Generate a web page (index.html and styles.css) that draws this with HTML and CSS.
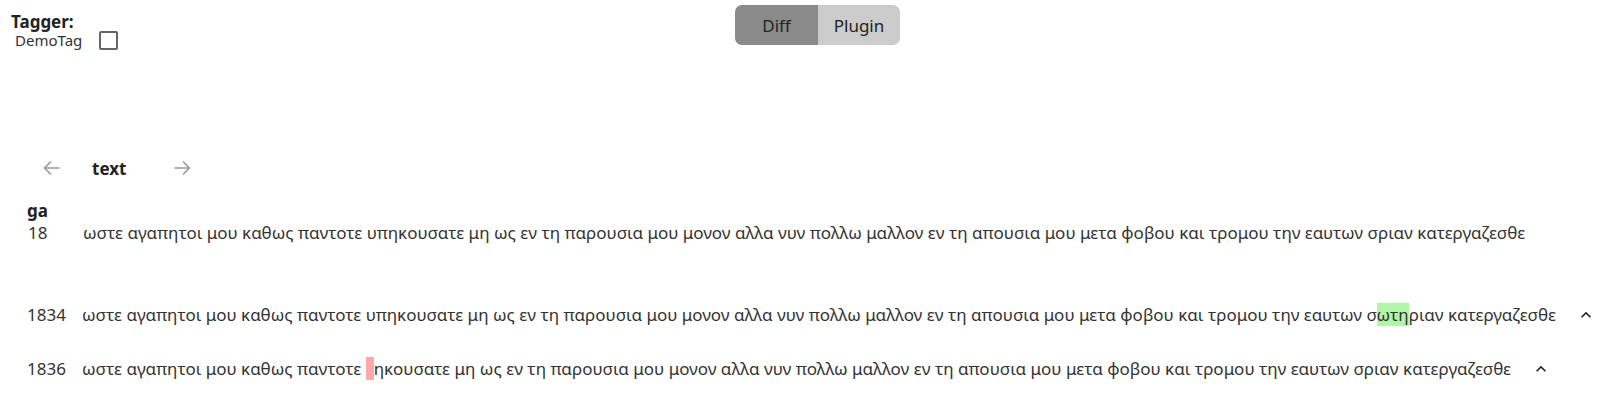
FILE: index.html
```html
<!DOCTYPE html>
<html>
<head>
<meta charset="utf-8">
<link rel="stylesheet" href="styles.css">
</head>
<body>
<div class="top">
  <div class="tagger">
    <div class="tagger-title">Tagger:</div>
    <label class="tag-row"><span class="tag-name">DemoTag</span><span class="box"></span></label>
  </div>
  <div class="toggle">
    <div class="tbtn active">Diff</div>
    <div class="tbtn">Plugin</div>
  </div>
  <div></div>
</div>
<div class="nav">
  <svg class="arrow" width="17" height="16" viewBox="0 0 17 16"><path d="M16.5 8H1.5M8 1.5L1.5 8L8 14.5" fill="none" stroke="#999" stroke-width="1.6"/></svg>
  <span class="nav-title">text</span>
  <svg class="arrow" width="17" height="16" viewBox="0 0 17 16"><path d="M0.5 8H15.5M9 1.5L15.5 8L9 14.5" fill="none" stroke="#999" stroke-width="1.6"/></svg>
</div>
<div class="base">
  <div class="siglum">ga</div>
  <div class="row"><span class="num">18</span><span class="txt">ωστε αγαπητοι μου καθως παντοτε υπηκουσατε μη ως εν τη παρουσια μου μονον αλλα νυν πολλω μαλλον εν τη απουσια μου μετα φοβου και τρομου την εαυτων σριαν κατεργαζεσθε</span></div>
</div>
<div class="row wit w1"><span class="num">1834</span><span class="txt">ωστε αγαπητοι μου καθως παντοτε υπηκουσατε μη ως εν τη παρουσια μου μονον αλλα νυν πολλω μαλλον εν τη απουσια μου μετα φοβου και τρομου την εαυτων σ<span class="ins">ωτη</span>ριαν κατεργαζεσθε</span><svg class="chev" width="20" height="20" viewBox="0 0 24 24"><path d="M7.41 15.41L12 10.83l4.59 4.58L18 14l-6-6-6 6z" fill="#222"/></svg></div>
<div class="row wit w2"><span class="num">1836</span><span class="txt">ωστε αγαπητοι μου καθως παντοτε <span class="del"></span>ηκουσατε μη ως εν τη παρουσια μου μονον αλλα νυν πολλω μαλλον εν τη απουσια μου μετα φοβου και τρομου την εαυτων σριαν κατεργαζεσθε</span><svg class="chev" width="20" height="20" viewBox="0 0 24 24"><path d="M7.41 15.41L12 10.83l4.59 4.58L18 14l-6-6-6 6z" fill="#222"/></svg></div>
</body>
</html>
```
FILE: styles.css
```css
html, body { margin: 0; padding: 0; background: #fff; }
body { font-family: "Noto Sans", "Open Sans", sans-serif; color: #333; }
.top { display: grid; grid-template-columns: 1fr auto 1fr; padding-top: 5px; }
.tagger { padding-left: 11px; padding-top: 7px; }
.tagger-title { font-weight: bold; font-size: 17px; line-height: 20px; color: #222; }
.tag-row { display: flex; align-items: center; gap: 17px; padding-left: 4px; margin-top: -2px; }
.tag-name { font-size: 15px; color: #333; }
.box { width: 15px; height: 15px; border: 2px solid #666; border-radius: 2px; }
.toggle { display: flex; border-radius: 7px; overflow: hidden; height: 40px; margin-left: 13px; }
.tbtn { display: flex; align-items: center; justify-content: center; font-size: 17px; color: #222; background: #ccc; width: 82px; }
.tbtn.active { background: #8a8a8a; width: 83px; }
.nav { display: flex; align-items: center; margin-top: 107px; padding-left: 43px; height: 22px; }
.nav-title { font-weight: bold; font-size: 17px; color: #222; margin: 0 48px 0 32px; }
.base { margin-top: 22px; padding-left: 27px; }
.siglum { font-weight: bold; font-size: 17px; color: #222; line-height: 20px; }
.row { display: flex; align-items: center; font-size: 17px; line-height: 23px; }
.base .row { margin-left: 1px; }
.num { width: 55px; flex: none; }
.txt { white-space: nowrap; }
.wit { padding-left: 27px; }
.w1 { margin-top: 59px; }
.w2 { margin-top: 31px; }
.ins { background: #b3f5a8; }
.del { display: inline-block; width: 8px; height: 23px; background: #ffaaaa; vertical-align: top; }
.chev { margin-left: 20px; flex: none; }
```
